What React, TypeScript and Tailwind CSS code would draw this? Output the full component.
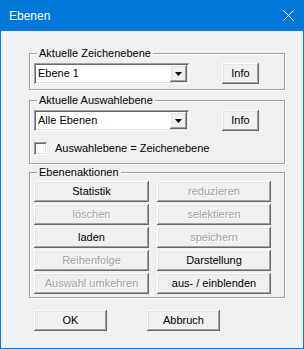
import type { ReactNode } from 'react'

const raised =
  'bg-[#f0f0f0] shadow-[inset_-1px_-1px_0_#696969,inset_1px_1px_0_#ffffff,inset_-2px_-2px_0_#a0a0a0,inset_2px_2px_0_#e3e3e3]'
const sunken =
  'bg-white shadow-[inset_1px_1px_0_#a0a0a0,inset_-1px_-1px_0_#ffffff,inset_2px_2px_0_#696969,inset_-2px_-2px_0_#e3e3e3]'

function Button({ children, disabled, className = '' }: { children: ReactNode; disabled?: boolean; className?: string }) {
  return (
    <div
      className={`${raised} flex h-[21px] items-center justify-center leading-none ${
        disabled ? 'text-[#a0a0a0] [text-shadow:1px_1px_0_#ffffff]' : 'text-black'
      } ${className}`}
    >
      {children}
    </div>
  )
}

function Group({ label, children, className = '' }: { label: string; children: ReactNode; className?: string }) {
  return (
    <div className={`w-[256px] border border-[#a0a0a0] shadow-[1px_1px_0_#ffffff,inset_1px_1px_0_#ffffff] ${className}`}>
      <div className="-mt-[7px] ml-[7px] w-fit bg-[#f0f0f0] px-[2px] leading-[13px]">{label}</div>
      {children}
    </div>
  )
}

function Combo({ value }: { value: string }) {
  return (
    <div className={`${sunken} flex h-[21px] w-[155px] items-center p-[2px]`}>
      <span className="flex-1 pl-[2px] leading-none">{value}</span>
      <div className={`${raised} flex h-[17px] w-[17px] items-center justify-center`}>
        <svg width="7" height="4" viewBox="0 0 7 4">
          <path d="M0 0h7L3.5 4z" fill="#000" />
        </svg>
      </div>
    </div>
  )
}

export default function App() {
  return (
    <div className="flex h-[349px] w-[304px] flex-col font-['Liberation_Sans',Arial,sans-serif] text-[11px] text-black">
      <div className="flex h-[31px] shrink-0 items-center justify-between bg-[#0078d7] pl-[9px] pr-[10px] text-[12px] text-white">
        <span>Ebenen</span>
        <svg width="11" height="11" viewBox="0 0 11 11">
          <path d="M0.5 0.5l10 10M10.5 0.5l-10 10" stroke="#fff" strokeWidth="1" />
        </svg>
      </div>

      <div className="flex flex-1 flex-col border-x border-b border-[#0078d7] bg-[#f0f0f0] pl-[28px] pt-[22px]">
        <Group label="Aktuelle Zeichenebene">
          <div className="mt-[3px] flex items-center pb-[5px] pl-[4px]">
            <Combo value="Ebene 1" />
            <Button className="ml-[33px] w-[37px]">Info</Button>
          </div>
        </Group>

        <Group label="Aktuelle Auswahlebene" className="mt-[10px]">
          <div className="mt-[3px] flex items-center pl-[4px]">
            <Combo value="Alle Ebenen" />
            <Button className="ml-[33px] w-[37px]">Info</Button>
          </div>
          <div className="mt-[11px] flex items-center pb-[8px] pl-[4px]">
            <div className={`${sunken} h-[13px] w-[13px]`} />
            <span className="ml-[8px] leading-none">Auswahlebene = Zeichenebene</span>
          </div>
        </Group>

        <Group label="Ebenenaktionen" className="mt-[8px]">
          <div className="mt-[2px] grid grid-cols-[115px_114px] gap-x-[8px] gap-y-[2px] pb-[3px] pl-[4px]">
            <Button>Statistik</Button>
            <Button disabled>reduzieren</Button>
            <Button disabled>löschen</Button>
            <Button disabled>selektieren</Button>
            <Button>laden</Button>
            <Button disabled>speichern</Button>
            <Button disabled>Reihenfolge</Button>
            <Button>Darstellung</Button>
            <Button disabled>Auswahl umkehren</Button>
            <Button>aus- / einblenden</Button>
          </div>
        </Group>

        <div className="mt-[12px] flex pl-[5px]">
          <Button className="w-[73px]">OK</Button>
          <Button className="ml-[40px] w-[73px]">Abbruch</Button>
        </div>
      </div>
    </div>
  )
}
